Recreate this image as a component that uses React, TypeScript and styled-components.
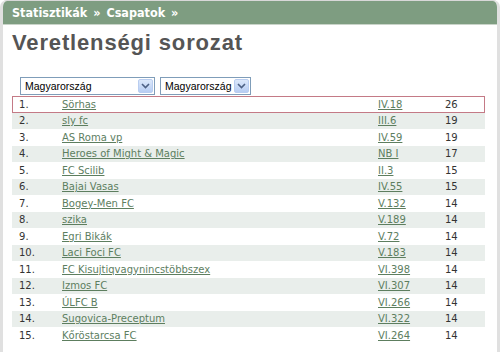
import styled, { createGlobalStyle } from 'styled-components';

const GlobalStyle = createGlobalStyle`
  html, body {
    margin: 0;
    padding: 0;
    background: #fff;
  }
`;

type Team = { rank: number; name: string; league: string; points: number };

const TEAMS: Team[] = [
  { rank: 1, name: 'Sörhas', league: 'IV.18', points: 26 },
  { rank: 2, name: 'sly fc', league: 'III.6', points: 19 },
  { rank: 3, name: 'AS Roma vp', league: 'IV.59', points: 19 },
  { rank: 4, name: 'Heroes of Might & Magic', league: 'NB I', points: 17 },
  { rank: 5, name: 'FC Scilib', league: 'II.3', points: 15 },
  { rank: 6, name: 'Bajai Vasas', league: 'IV.55', points: 15 },
  { rank: 7, name: 'Bogey-Men FC', league: 'V.132', points: 14 },
  { rank: 8, name: 'szika', league: 'V.189', points: 14 },
  { rank: 9, name: 'Egri Bikák', league: 'V.72', points: 14 },
  { rank: 10, name: 'Laci Foci FC', league: 'V.183', points: 14 },
  { rank: 11, name: 'FC Kisujtiqvagynincstöbbszex', league: 'VI.398', points: 14 },
  { rank: 12, name: 'Izmos FC', league: 'VI.307', points: 14 },
  { rank: 13, name: 'ÚLFC B', league: 'VI.266', points: 14 },
  { rank: 14, name: 'Sugovica-Preceptum', league: 'VI.322', points: 14 },
  { rank: 15, name: 'Kőröstarcsa FC', league: 'VI.264', points: 14 },
];

const Frame = styled.div`
  width: 500px;
  height: 352px;
  box-sizing: border-box;
  border-left: 3px solid #e0e0e0;
  border-right: 3px solid #e0e0e0;
  border-top: 1px solid #d8d8d8;
  border-radius: 7px 7px 0 0;
  overflow: hidden;
  font-family: 'DejaVu Sans', Verdana, sans-serif;
`;

const Crumbs = styled.div`
  height: 23px;
  background: #7e9d81;
  border-bottom: 1px solid #c9d4c9;
  color: #fff;
  font-family: 'DejaVu Sans Condensed', 'DejaVu Sans', sans-serif;
  font-weight: bold;
  font-size: 12.5px;
  line-height: 23px;
  padding-left: 9px;
  word-spacing: 2px;
`;

const Title = styled.h1`
  margin: 5px 0 0 9px;
  font-family: 'Liberation Sans', Arial, sans-serif;
  font-size: 22px;
  font-weight: bold;
  letter-spacing: 0.85px;
  color: #555;
  line-height: 26px;
`;

const Filters = styled.div`
  display: flex;
  gap: 5px;
  margin: 21px 0 0 17px;
`;

const Select = styled.div<{ $width: number }>`
  width: ${(p) => p.$width}px;
  height: 18px;
  box-sizing: border-box;
  border: 1px solid #7f9db9;
  display: flex;
  align-items: center;
  justify-content: space-between;
  font-family: 'Liberation Sans', Arial, sans-serif;
  font-size: 10.5px;
  color: #000;
  padding-left: 4px;
`;

const Arrow = styled.span`
  width: 15px;
  height: 14px;
  margin-right: 1px;
  background: linear-gradient(#dce8fb, #b7cdf3);
  border: 1px solid #b9cdf0;
  box-sizing: border-box;
  border-radius: 2px;
  display: flex;
  align-items: center;
  justify-content: center;
`;

const Table = styled.table`
  margin: 1px 0 0 9px;
  width: 473px;
  table-layout: fixed;
  border-collapse: collapse;
  font-size: 10px;
  color: #333;
`;

const Row = styled.tr<{ $even: boolean; $mine: boolean }>`
  height: 16.5px;
  background: ${(p) => (p.$even ? '#e9eeeb' : 'transparent')};
  outline: ${(p) => (p.$mine ? '1px solid #c47a86' : 'none')};
  outline-offset: -1px;
`;

const Cell = styled.td<{ $pl?: number }>`
  padding: 0 0 0 ${(p) => p.$pl ?? 0}px;
  white-space: nowrap;
`;

const Link = styled.a`
  color: #5d7e5f;
  text-decoration: underline;
  cursor: pointer;
`;

const ArrowIcon = () => (
  <svg width="9" height="6" viewBox="0 0 9 6">
    <path d="M1 1 L4.5 4.5 L8 1" fill="none" stroke="#4d6185" strokeWidth="1.6" />
  </svg>
);

export default function App() {
  return (
    <>
      <GlobalStyle />
      <Frame>
        <Crumbs>Statisztikák » Csapatok »</Crumbs>
        <Title>Veretlenségi sorozat</Title>
        <Filters>
          <Select $width={135}>
            Magyarország
            <Arrow>
              <ArrowIcon />
            </Arrow>
          </Select>
          <Select $width={91}>
            Magyarország
            <Arrow>
              <ArrowIcon />
            </Arrow>
          </Select>
        </Filters>
        <Table>
          <colgroup>
            <col style={{ width: 50 }} />
            <col style={{ width: 316 }} />
            <col style={{ width: 67 }} />
            <col style={{ width: 40 }} />
          </colgroup>
          <tbody>
            {TEAMS.map((t) => (
              <Row key={t.rank} $even={t.rank % 2 === 0} $mine={t.rank === 1}>
                <Cell $pl={7}>{t.rank}.</Cell>
                <Cell>
                  <Link>{t.name}</Link>
                </Cell>
                <Cell>
                  <Link>{t.league}</Link>
                </Cell>
                <Cell>{t.points}</Cell>
              </Row>
            ))}
          </tbody>
        </Table>
      </Frame>
    </>
  );
}
